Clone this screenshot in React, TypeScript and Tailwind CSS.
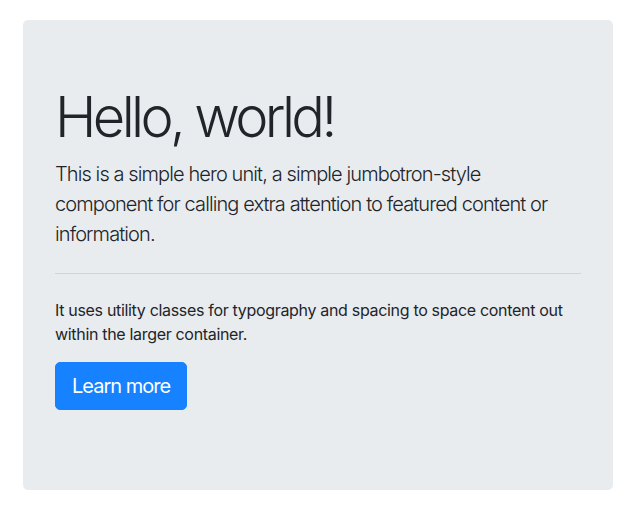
export default function App() {
  return (
    <div className="min-h-[516px] bg-white pt-[20px] pl-[23px] font-['Inter','Liberation_Sans',sans-serif] text-[#212529]">
      <div className="w-[590px] rounded-[5px] bg-[#e9ecef] px-8 pt-16 pb-16">
        <h1 className="text-[56px] font-light leading-[1.2] tracking-[-0.065em] mb-2">Hello, world!</h1>
        <p className="text-[20px] font-light leading-[1.5] tracking-[-0.045em]">
          This is a simple hero unit, a simple jumbotron-style component for calling extra attention to featured content or
          information.
        </p>
        <hr className="my-6 border-t border-black/10" />
        <p className="text-base leading-6 tracking-[-0.02em]">
          It uses utility classes for typography and spacing to space content out within the larger container.
        </p>
        <div className="mt-4 mb-4">
          <a
            href="#"
            className="inline-block rounded-[5px] border border-[#1782ff] bg-[#1782ff] px-4 py-2 text-[20px] leading-[1.5] tracking-[-0.05em] text-white"
          >
            Learn more
          </a>
        </div>
      </div>
    </div>
  );
}
